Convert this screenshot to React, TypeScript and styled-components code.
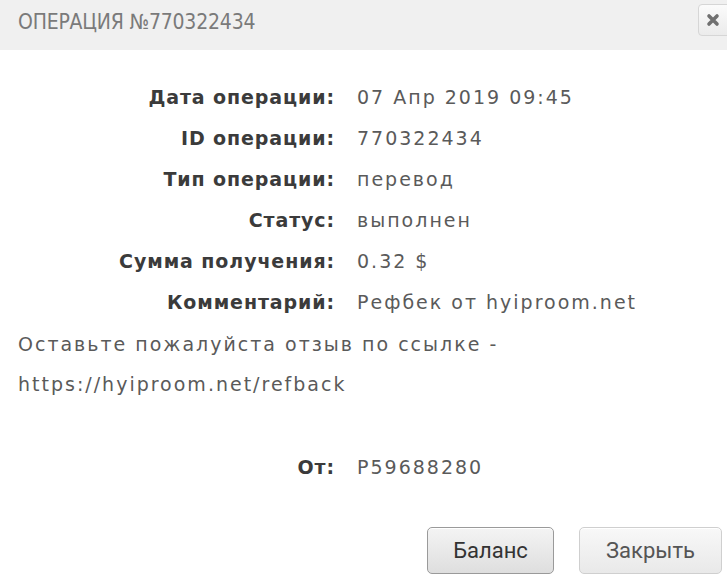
import React from "react";
import styled, { createGlobalStyle } from "styled-components";

const Global = createGlobalStyle`
  html, body { margin: 0; padding: 0; background: #ffffff; }
  body { width: 727px; height: 575px; overflow: hidden; font-family: "DejaVu Sans", "Open Sans", sans-serif; }
`;

const Dialog = styled.div`
  width: 727px;
  height: 575px;
  display: flex;
  flex-direction: column;
  background: #fff;
`;

const Header = styled.div`
  height: 50px;
  background: #f0f0f0;
  display: flex;
  align-items: flex-start;
  justify-content: space-between;
  padding-left: 18px;
  box-sizing: border-box;
`;

const Title = styled.h1`
  margin: 0;
  padding-top: 8px;
  font-family: "DejaVu Sans Condensed", "DejaVu Sans", sans-serif;
  font-weight: normal;
  font-size: 21px;
  letter-spacing: -0.2px;
  color: #7a7a7a;
  line-height: 28px;
`;

const CloseButton = styled.button`
  margin-top: 4px;
  margin-right: -8px;
  width: 37px;
  height: 32px;
  border: 1px solid #d6d6d6;
  border-radius: 4px;
  background: linear-gradient(#fbfbfb, #ebebeb);
  padding: 0 0 0 7px;
  display: flex;
  align-items: center;
  justify-content: flex-start;
`;

const Body = styled.div`
  padding: 26px 0 0 18px;
  display: flex;
  flex-direction: column;
`;

const Details = styled.div`
  display: grid;
  grid-template-columns: 316px 1fr;
  column-gap: 23px;
  grid-auto-rows: 41px;
  align-items: center;
`;

const Label = styled.div`
  text-align: right;
  font-weight: bold;
  font-size: 19px;
  letter-spacing: 0.9px;
  margin-right: -1px;
  color: #3b3b3b;
  white-space: nowrap;
`;

const Value = styled.div`
  font-size: 19px;
  letter-spacing: 2px;
  color: #5a5a5a;
  white-space: nowrap;
`;

const Note = styled.p`
  margin: 2px 0 0 0;
  font-size: 19px;
  letter-spacing: 2px;
  line-height: 40px;
  color: #5a5a5a;
`;

const FromBlock = styled(Details)`
  margin-top: 42px;
`;

const Footer = styled.div`
  margin-top: auto;
  margin-bottom: 1px;
  display: flex;
  justify-content: flex-end;
  gap: 25px;
  padding-right: 5px;
`;

const Button = styled.button<{ $primary?: boolean }>`
  height: 47px;
  padding: 0 ${(p) => (p.$primary ? "24px" : "26px")};
  min-width: ${(p) => (p.$primary ? "127px" : "143px")};
  border: 1px solid ${(p) => (p.$primary ? "#9a9a9a" : "#cfcfcf")};
  border-radius: 5px;
  background: ${(p) =>
    p.$primary
      ? "linear-gradient(#f4f4f4, #dedede)"
      : "linear-gradient(#f8f8f8, #e9e9e9)"};
  font-family: Roboto, "Liberation Sans", sans-serif;
  font-size: 22px;
  color: ${(p) => (p.$primary ? "#333" : "#555")};
  box-shadow: inset 0 1px 0 #fff;
`;

const rows: [string, string][] = [
  ["Дата операции:", "07 Апр 2019 09:45"],
  ["ID операции:", "770322434"],
  ["Тип операции:", "перевод"],
  ["Статус:", "выполнен"],
  ["Сумма получения:", "0.32 $"],
  ["Комментарий:", "Рефбек от hyiproom.net"],
];

export default function App() {
  return (
    <Dialog>
      <Global />
      <Header>
        <Title>ОПЕРАЦИЯ №770322434</Title>
        <CloseButton aria-label="close">
          <svg width="14" height="14" viewBox="0 0 14 14">
            <path d="M3 3 L11 11 M11 3 L3 11" stroke="#707070" strokeWidth="3.6" strokeLinecap="round" />
          </svg>
        </CloseButton>
      </Header>
      <Body>
        <Details>
          {rows.map(([l, v]) => (
            <React.Fragment key={l}>
              <Label>{l}</Label>
              <Value>{v}</Value>
            </React.Fragment>
          ))}
        </Details>
        <Note>
          Оставьте пожалуйста отзыв по ссылке -
          <br />
          https://hyiproom.net/refback
        </Note>
        <FromBlock>
          <Label>От:</Label>
          <Value>P59688280</Value>
        </FromBlock>
      </Body>
      <Footer>
        <Button $primary>Баланс</Button>
        <Button>Закрыть</Button>
      </Footer>
    </Dialog>
  );
}
